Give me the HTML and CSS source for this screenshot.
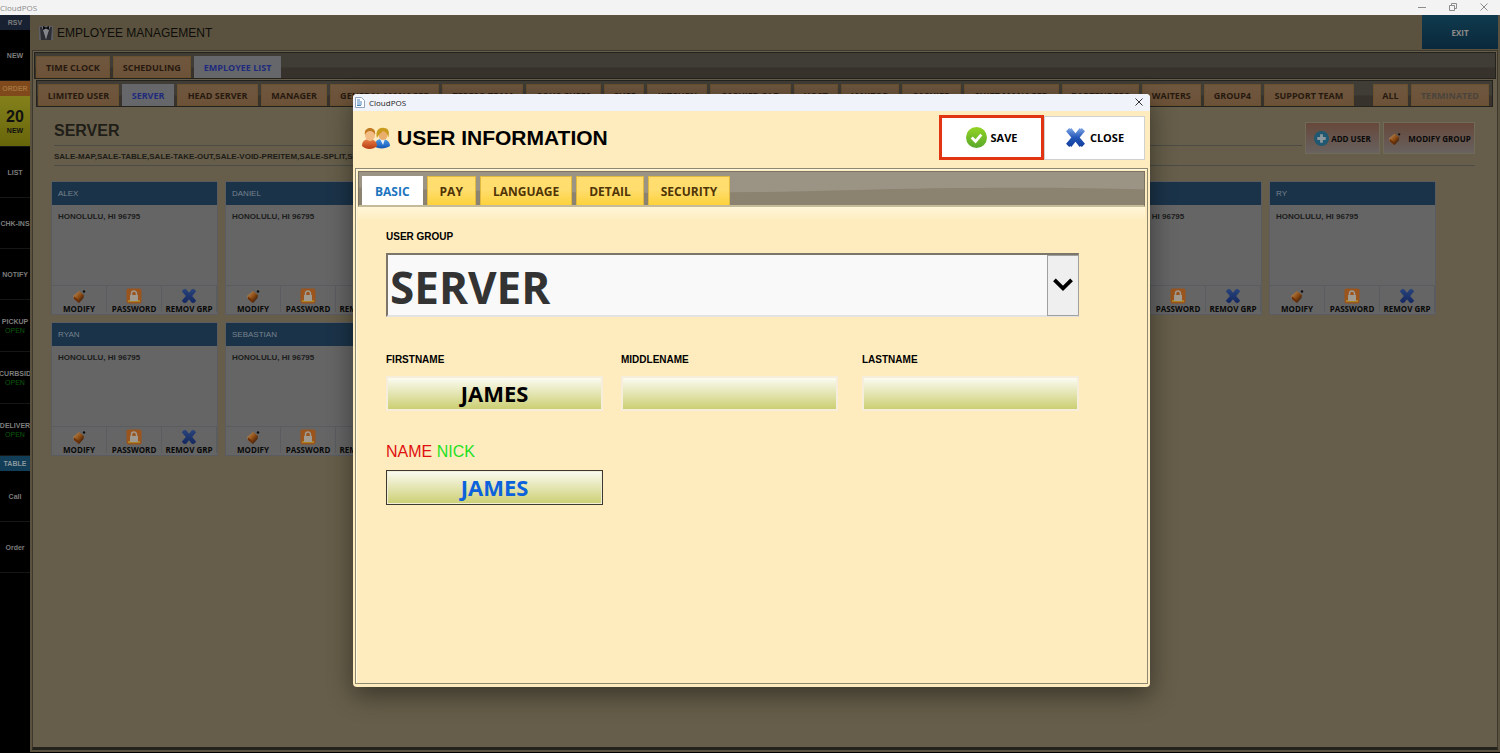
FILE: index.html
```
<!DOCTYPE html>
<html lang="en">

<head>
    <meta charset="UTF-8">
    <title>CloudPOS</title>
    <link rel="stylesheet" href="styles.css">
</head>

<body>

    <!-- shared icons -->
    <svg class="sprite" aria-hidden="true">
        <defs>
            <linearGradient id="g-blue" x1="0" y1="0" x2="0" y2="1">
                <stop offset="0" stop-color="#7fa6e6" />
                <stop offset=".5" stop-color="#2457b8" />
                <stop offset="1" stop-color="#123f9c" />
            </linearGradient>
            <linearGradient id="g-dim" x1="0" y1="0" x2="0" y2="1">
                <stop offset="0" stop-color="#29447c" />
                <stop offset="1" stop-color="#14275f" />
            </linearGradient>
            <linearGradient id="g-green" x1="0" y1="0" x2="0" y2="1">
                <stop offset="0" stop-color="#93d423" />
                <stop offset="1" stop-color="#58a82c" />
            </linearGradient>
            <linearGradient id="g-red" x1="0" y1="0" x2="0" y2="1">
                <stop offset="0" stop-color="#e8824a" />
                <stop offset="1" stop-color="#b83a10" />
            </linearGradient>
            <linearGradient id="g-shirt" x1="0" y1="0" x2="0" y2="1">
                <stop offset="0" stop-color="#4a9ae8" />
                <stop offset="1" stop-color="#1656b4" />
            </linearGradient>
            <linearGradient id="g-pen" x1="0" y1="0" x2="1" y2="1">
                <stop offset=".2" stop-color="#a87a4a" />
                <stop offset=".5" stop-color="#8f4c12" />
                <stop offset=".8" stop-color="#43220c" />
            </linearGradient>
        </defs>
        <symbol id="i-pen" viewBox="0 0 16 16">
            <path d="M2 8 8 3l5 4-.5 3L8 15 3 11z" fill="url(#g-pen)" />
            <path d="m3 8.500 4.500 3.500L8 15 3 11z" fill="#6b3008" />
            <circle cx="13" cy="3.500" r="1.200" fill="#0c0c0c" />
        </symbol>
        <symbol id="i-lock" viewBox="0 0 16 16">
            <rect x=".5" y=".5" width="15" height="15" rx="2" fill="#9a541d" />
            <path d="M2 12h12v2H2z" fill="#a98022" />
            <path d="M4 7h8v6H4z" fill="#a09a90" />
            <path d="M5.500 7V5.500a2.500 2.500 0 0 1 5 0V7" fill="none" stroke="#a09a90" stroke-width="1.500" />
        </symbol>
        <symbol id="i-x" viewBox="0 0 20 20">
            <path d="M1 4 4 1l1 1 1-1 4 5 4-5 1 1 1-1 3 3-5 6 5 6-3 3-1-1-1 1-4-5-4 5-1-1-1 1-3-3 5-6z" />
        </symbol>
    </svg>

    <div class="titlebar">
        <span>CloudPOS</span>
        <div class="win-buttons">
            <button type="button" aria-label="Minimize"><svg viewBox="0 0 8 8"><path d="M0 4.500h8" /></svg></button>
            <button type="button" aria-label="Restore"><svg viewBox="0 0 8 8"><path d="M.5 2.500h5v5h-5zM2.500 2V.5h5v5H6" /></svg></button>
            <button type="button" aria-label="Close window"><svg viewBox="0 0 8 8"><path d="m.5.500 7 7m0-7-7 7" /></svg></button>
        </div>
    </div>

    <div class="app">
        <nav class="side">
            <h2 class="side-rsv">RSV</h2>
            <button type="button">NEW</button>
            <h2 class="side-order">ORDER</h2>
            <button type="button" class="side-new"><b>20</b>NEW</button>
            <button type="button">LIST</button>
            <button type="button">CHK-INS</button>
            <button type="button">NOTIFY</button>
            <button type="button" class="open">PICKUP<i>OPEN</i></button>
            <button type="button" class="open">CURBSID<i>OPEN</i></button>
            <button type="button" class="open">DELIVER<i>OPEN</i></button>
            <h2 class="side-table">TABLE</h2>
            <button type="button">Call</button>
            <button type="button">Order</button>
        </nav>

        <main class="main">
            <header class="top">
                <svg class="tux" viewBox="0 0 14 14">
                    <path d="M0 0h14v14H0z" fill="#5d5e63" />
                    <path d="M1 1h3l3 13H2zM13 1h-3L7 14h5z" fill="#2b2d33" />
                    <path d="m3 1 4 12 4-12z" fill="#85868a" />
                    <path d="m4 0 3 1.500L10 0v4L7 2.500 4 4z" fill="#0b0b0c" />
                </svg>
                <h1>EMPLOYEE MANAGEMENT</h1>
                <button type="button" class="exit">EXIT</button>
            </header>

            <div class="frame">
                <div class="bar bar-main">
                    <button type="button">TIME CLOCK</button>
                    <button type="button">SCHEDULING</button>
                    <button type="button" class="active">EMPLOYEE LIST</button>
                </div>

                <div class="bar bar-groups">
                    <button type="button">LIMITED USER</button>
                    <button type="button" class="active">SERVER</button>
                    <button type="button">HEAD SERVER</button>
                    <button type="button">MANAGER</button>
                    <button type="button">GENERAL MANAGER</button>
                    <button type="button">TEPESO TEAM</button>
                    <button type="button">SOUS CHEFS</button>
                    <button type="button">CHEF</button>
                    <button type="button">KITCHEN</button>
                    <button type="button">CASHIER OLD</button>
                    <button type="button">HOST</button>
                    <button type="button">JANITOR</button>
                    <button type="button">CASHIER</button>
                    <button type="button">SHIFT MANAGER</button>
                    <button type="button">BARTENDERS</button>
                    <button type="button">WAITERS</button>
                    <button type="button">GROUP4</button>
                    <button type="button">SUPPORT TEAM</button>
                    <span></span>
                    <button type="button">ALL</button>
                    <button type="button" class="off">TERMINATED</button>
                </div>

                <section class="group">
                    <div class="group-head">
                        <h2>SERVER</h2>
                        <div class="group-tools">
                            <button type="button">
                                <svg viewBox="0 0 16 16"><circle cx="8" cy="8" r="8" fill="#1f5870" /><path d="M8 3.500v9M3.500 8h9" stroke="#8b979c" stroke-width="3" /></svg>
                                ADD USER
                            </button>
                            <button type="button" class="wide"><svg><use href="#i-pen" /></svg>MODIFY GROUP</button>
                        </div>
                    </div>
                    <p class="perms">SALE-MAP,SALE-TABLE,SALE-TAKE-OUT,SALE-VOID-PREITEM,SALE-SPLIT,SALE</p>

                    <div class="cards">
                        <article class="card">
                            <h3>ALEX</h3>
                            <p>HONOLULU, HI 96795</p>
                            <footer>
                                <button type="button"><svg><use href="#i-pen" /></svg>MODIFY</button>
                                <button type="button"><svg><use href="#i-lock" /></svg>PASSWORD</button>
                                <button type="button"><svg><use href="#i-x" /></svg>REMOV GRP</button>
                            </footer>
                        </article>
                        <article class="card">
                            <h3>DANIEL</h3>
                            <p>HONOLULU, HI 96795</p>
                            <footer>
                                <button type="button"><svg><use href="#i-pen" /></svg>MODIFY</button>
                                <button type="button"><svg><use href="#i-lock" /></svg>PASSWORD</button>
                                <button type="button"><svg><use href="#i-x" /></svg>REMOV GRP</button>
                            </footer>
                        </article>
                        <article class="card"></article>
                        <article class="card"></article>
                        <article class="card"></article>
                        <article class="card"></article>
                        <article class="card">
                            <h3></h3>
                            <p>HONOLULU, HI 96795</p>
                            <footer>
                                <button type="button"><svg><use href="#i-pen" /></svg>MODIFY</button>
                                <button type="button"><svg><use href="#i-lock" /></svg>PASSWORD</button>
                                <button type="button"><svg><use href="#i-x" /></svg>REMOV GRP</button>
                            </footer>
                        </article>
                        <article class="card">
                            <h3>RY</h3>
                            <p>HONOLULU, HI 96795</p>
                            <footer>
                                <button type="button"><svg><use href="#i-pen" /></svg>MODIFY</button>
                                <button type="button"><svg><use href="#i-lock" /></svg>PASSWORD</button>
                                <button type="button"><svg><use href="#i-x" /></svg>REMOV GRP</button>
                            </footer>
                        </article>
                        <article class="card">
                            <h3>RYAN</h3>
                            <p>HONOLULU, HI 96795</p>
                            <footer>
                                <button type="button"><svg><use href="#i-pen" /></svg>MODIFY</button>
                                <button type="button"><svg><use href="#i-lock" /></svg>PASSWORD</button>
                                <button type="button"><svg><use href="#i-x" /></svg>REMOV GRP</button>
                            </footer>
                        </article>
                        <article class="card">
                            <h3>SEBASTIAN</h3>
                            <p>HONOLULU, HI 96795</p>
                            <footer>
                                <button type="button"><svg><use href="#i-pen" /></svg>MODIFY</button>
                                <button type="button"><svg><use href="#i-lock" /></svg>PASSWORD</button>
                                <button type="button"><svg><use href="#i-x" /></svg>REMOV GRP</button>
                            </footer>
                        </article>
                    </div>
                </section>
            </div>
        </main>
    </div>

    <!-- user dialog -->
    <div class="dialog" role="dialog" aria-labelledby="dialog-title">
        <div class="dialog-bar">
            <svg class="doc" viewBox="0 0 10 11">
                <path d="M.5.500h6l3 3v7h-9z" fill="#fff" stroke="#8fa3bd" />
                <path d="M2 3h3M2 5h5M2 7h5M2 8.500h4" stroke="#4b84bd" />
            </svg>
            <span>CloudPOS</span>
            <button type="button" aria-label="Close dialog"><svg viewBox="0 0 8 8"><path d="m.5.500 7 7m0-7-7 7" /></svg></button>
        </div>

        <div class="dialog-head">
            <svg class="users" viewBox="0 0 28 22">
                <path d="M13 20c0-6 2-8 7-8s8 3 8 7c-4 3-11 3-15 1z" fill="url(#g-shirt)" />
                <path d="m18 12 3 6 2-6z" fill="#e6eefa" />
                <ellipse cx="21" cy="7.500" rx="4.500" ry="5.500" fill="#eaae6c" />
                <path d="M15 11c-2-7 2-11 7-10 5 0 6 5 4 10 0-4-2-6-5-7-2 2-4 3-6 7z" fill="#c99a1e" />
                <path d="M0 19c0-5 3-7 7-7s8 2 8 7c-4 4-11 4-15 0z" fill="url(#g-red)" />
                <ellipse cx="8" cy="8" rx="5" ry="6" fill="#f2bd84" />
                <path d="M3 8C2 3 5 1 8 1s6 2 5 7c-1-3-3-4-5-4-2 0-4 1-5 4z" fill="#c27a22" />
            </svg>
            <h1 id="dialog-title">USER INFORMATION</h1>
            <button type="button" class="save">
                <svg viewBox="0 0 22 22"><circle cx="11" cy="11" r="11" fill="url(#g-green)" /><path d="m6 11 4 4 6-7" fill="none" stroke="#fff" stroke-width="3" /></svg>
                SAVE
            </button>
            <button type="button" class="close"><svg><use href="#i-x" /></svg>CLOSE</button>
        </div>

        <div class="panel">
            <div class="tabs">
                <svg class="wave" viewBox="0 0 100 36" preserveAspectRatio="none" aria-hidden="true"><path d="M0 17C25 24 45 24 62 20S90 17 100 19V36H0z" /></svg>
                <button type="button" class="active">BASIC</button>
                <button type="button">PAY</button>
                <button type="button">LANGUAGE</button>
                <button type="button">DETAIL</button>
                <button type="button">SECURITY</button>
            </div>

            <form class="user-form">
                <div class="row-group">
                    <label for="group">USER GROUP</label>
                    <div class="select-box">
                        <select id="group">
                            <option>SERVER</option>
                        </select>
                        <svg viewBox="0 0 30 62" aria-hidden="true"><path d="m6 25 9 9 9-9" /></svg>
                    </div>
                </div>
                <div class="row-names">
                    <div>
                        <label for="first">FIRSTNAME</label>
                        <input id="first" type="text" value="JAMES">
                    </div>
                    <div>
                        <label for="middle">MIDDLENAME</label>
                        <input id="middle" type="text">
                    </div>
                    <div>
                        <label for="last">LASTNAME</label>
                        <input id="last" type="text">
                    </div>
                </div>
                <div class="row-nick">
                    <label for="nick"><span class="red">NAME</span> <span class="green">NICK</span></label>
                    <input id="nick" type="text" value="JAMES">
                </div>
            </form>
        </div>
    </div>

</body>

</html>
```
FILE: styles.css
```
* {
    box-sizing: border-box;
}

body {
    margin: 0;
    height: 100vh;
    display: flex;
    flex-direction: column;
    overflow: hidden;
    background: #000;
    font-family: "Liberation Sans", Arial, sans-serif;
}

h1,
h2,
h3,
p {
    margin: 0;
}

button {
    margin: 0;
    padding: 0;
    border: 0;
    background: none;
    color: inherit;
    font: inherit;
    white-space: nowrap;
    cursor: pointer;
}

.sprite {
    position: absolute;
    width: 0;
    height: 0;
}

/* window title */
.titlebar {
    display: flex;
    justify-content: space-between;
    align-items: center;
    height: 15px;
    flex: none;
    padding-bottom: 1px;
    background: #f3f3f3;
    color: #8c8c8c;
    font: 8px "Open Sans", sans-serif;
}

.win-buttons {
    display: flex;
    gap: 23px;
    padding-right: 12px;
}

.win-buttons svg,
.dialog-bar button svg {
    display: block;
    width: 8px;
    height: 8px;
    fill: none;
    stroke: #8c8c8c;
}

.app {
    display: flex;
    flex: 1;
    min-height: 0;
}

/* left menu */
.side {
    width: 30px;
    flex: none;
    overflow: hidden;
    background: #000;
    color: #7d7d7d;
    font-size: 7px;
    font-weight: bold;
}

.side h2 {
    height: 15px;
    font-size: 7px;
    line-height: 15px;
    text-align: center;
}

.side-rsv {
    background: #182132;
}

.side-order {
    background: #80491c;
    color: #a3733c;
}

.side-table {
    background: #123d56;
    color: #8b979e;
}

.side button {
    display: flex;
    flex-direction: column;
    align-items: center;
    justify-content: center;
    width: 100%;
    height: 51px;
    border-bottom: 1px solid #161616;
    line-height: 9px;
}

.side .open {
    height: 52px;
}

.side i {
    color: #0b5a0b;
    font-style: normal;
    font-weight: normal;
}

.side .side-new {
    background: linear-gradient(#84811c, #67650a);
    color: #111;
}

.side b {
    font-size: 16px;
    line-height: 18px;
}

/* employee management */
.main {
    flex: 1;
    min-width: 0;
    display: flex;
    flex-direction: column;
    padding: 0 2px 2px 2px;
    background: #5a523e;
    border-bottom: 1px solid #000;
}

.top {
    display: flex;
    align-items: center;
    gap: 4px;
    height: 35px;
    flex: none;
    padding-left: 7px;
}

.tux {
    width: 14px;
    height: 14px;
}

.top h1 {
    flex: 1;
    color: #0e0d0a;
    font-size: 12px;
    font-weight: normal;
}

.exit {
    width: 76px;
    height: 34px;
    align-self: flex-start;
    background: linear-gradient(#0f3a4e, #0b283b);
    color: #8c8c88;
    font: bold 8px "Open Sans", sans-serif;
}

.frame {
    flex: 1;
    min-height: 0;
    padding: 1px 1px 0;
    border: 1px solid #3c382e;
    border-bottom: 3px solid #24221c;
    background: #665e4a;
}

.bar {
    display: flex;
    gap: 3px;
    height: 27px;
    padding: 3px 3px 0 1px;
    border: 1px solid #24221d;
    background: linear-gradient(#403d36 55%, #37332c 60%);
}

.bar button {
    padding: 0 9px;
    overflow: hidden;
    background: linear-gradient(#6f573f, #6c5238);
    border: 1px solid #69502e;
    color: #27190f;
    font: bold 9px "Open Sans", sans-serif;
}

.bar .active {
    background: #66676b;
    border-color: #66676b;
    color: #202a7c;
}

.bar .off {
    color: #4b443c;
}

.bar-groups {
    display: grid;
    grid-template-columns: 81fr 52fr 81fr 66fr 109fr 81fr 75fr 40fr 60fr 80fr 44fr 58fr 59fr 95fr 77fr 59fr 57fr 90fr 13fr 35fr 78fr;
    margin: 1px 3px 0 2px;
}

.bar-groups button {
    padding: 0;
}

.group {
    padding: 15px 21px 0 20px;
}

.group-head {
    display: flex;
    justify-content: space-between;
    gap: 3px;
    height: 32px;
}

.group h2 {
    flex: 1;
    height: 24px;
    border-bottom: 1px solid #4b4c46;
    color: #1f1d18;
    font-size: 16px;
    line-height: 18px;
}

.group-tools {
    display: flex;
    gap: 3px;
}

.group-tools button {
    display: flex;
    align-items: center;
    justify-content: center;
    gap: 2px;
    width: 75px;
    border: 1px solid #706a58;
    background: linear-gradient(#66483a, #686260);
    color: #0a0a0a;
    font: bold 8px "Open Sans", sans-serif;
}

.group-tools .wide {
    width: 92px;
    gap: 6px;
}

.group-tools svg {
    width: 15px;
    height: 15px;
    flex: none;
}

.group .perms {
    height: 12px;
    border-bottom: 1px solid #4b4c46;
    color: #1d1b17;
    font-size: 8px;
    font-weight: bold;
    line-height: 6px;
}

.cards {
    display: grid;
    grid-template-columns: repeat(auto-fill, 167px);
    gap: 7px;
    margin: 15px -3px 0;
}

.card {
    display: flex;
    flex-direction: column;
    height: 134px;
    padding-bottom: 2px;
    border: 1px solid #5a5c60;
    background: #656565;
    color: #1c1c1c;
    font-size: 8px;
}

.card h3 {
    height: 23px;
    padding-left: 6px;
    background: #1b3349;
    color: #76828d;
    font-size: 8px;
    font-weight: normal;
    line-height: 23px;
}

.card p {
    flex: 1;
    padding: 7px 6px;
    font-weight: bold;
    line-height: 9px;
}

.card footer {
    display: flex;
    height: 27px;
    border-top: 1px solid #5b5c60;
}

.card button {
    display: flex;
    flex-direction: column;
    align-items: center;
    flex: 1;
    height: 26px;
    padding-top: 2px;
    overflow: hidden;
    border-right: 1px solid #5b5c60;
    color: #090909;
    font: bold 8px "Open Sans", sans-serif;
    line-height: 10px;
}

.card svg {
    width: 16px;
    height: 16px;
    flex: none;
    fill: url(#g-dim);
}

/* dialog */
.dialog {
    position: absolute;
    top: 94px;
    bottom: 66px;
    left: calc(50% - 397px);
    width: 797px;
    display: flex;
    flex-direction: column;
    padding: 0 2px 3px;
    overflow: hidden;
    border-radius: 4px;
    background: #feecbe;
    box-shadow: 0 8px 26px rgba(0, 0, 0, .45);
}

.dialog-bar {
    display: flex;
    align-items: center;
    gap: 4px;
    height: 17px;
    flex: none;
    margin: 0 -2px;
    padding: 0 7px 1px 2px;
    background: #f1f3fb;
    color: #222;
    font: 8px "Open Sans", sans-serif;
}

.dialog-bar span {
    flex: 1;
}

.doc {
    width: 10px;
    height: 11px;
}

.dialog-bar button svg {
    stroke: #333;
}

.dialog-head {
    display: flex;
    align-items: center;
    height: 57px;
    flex: none;
    padding: 0 3px 4px 7px;
}

.users {
    width: 28px;
    height: 22px;
}

.dialog-head h1 {
    flex: 1;
    padding-left: 7px;
    color: #000;
    font-size: 21px;
}

.dialog-head button {
    display: flex;
    align-items: center;
    justify-content: center;
    gap: 4px;
    width: 101px;
    height: 44px;
    border: 1px solid #d0d0d0;
    background: #fff;
    color: #000;
    font: bold 11px "Open Sans", sans-serif;
}

.dialog-head .save {
    width: 105px;
    height: 45px;
    border: 3px solid #e03413;
}

.dialog-head button svg {
    width: 21px;
    height: 21px;
    fill: url(#g-blue);
}

.panel {
    flex: 1;
    padding: 2px;
    border: 1px solid #8f8871;
    box-shadow: inset 1px 1px #fff7e0;
}

.tabs {
    position: relative;
    display: flex;
    gap: 4px;
    height: 36px;
    padding: 4px 3px 0;
    background: #9b9384;
    border: 1px solid #7b7464;
    border-bottom: 2px solid #c6bb99;
}

.wave {
    position: absolute;
    inset: 0;
    width: 100%;
    height: 100%;
    fill: #8b8270;
}

.tabs button {
    position: relative;
    padding: 0 12px;
    border: 1px solid #e2b93f;
    border-bottom: 0;
    background: linear-gradient(#ffdd6e 45%, #fdd23c);
    color: #4f3506;
    font: bold 12px "Open Sans", sans-serif;
}

.tabs .active {
    background: #fff;
    border-color: #fff;
    color: #1b74c0;
}

.user-form {
    display: flex;
    flex-direction: column;
    padding: 24px 66px 0 28px;
    background: linear-gradient(#fff6d8, #feecbe 14px);
}

.user-form label {
    display: block;
    height: 22px;
    color: #000;
    font-size: 10px;
    font-weight: bold;
    line-height: 12px;
}

.select-box {
    display: grid;
    height: 64px;
    border: 2px solid #7c756a;
    border-right: 1px solid #a0a0a0;
    border-bottom: 2px solid #e2e2e2;
    background: #f9f9f9;
}

.select-box select,
.select-box svg {
    grid-area: 1 / 1;
}

.select-box select {
    width: 100%;
    height: 61px;
    padding: 2px 2px 0;
    border: 0;
    background: none;
    appearance: none;
    color: #333;
    font: bold 44px "Open Sans", sans-serif;
}

.select-box svg {
    justify-self: end;
    width: 31px;
    height: 61px;
    border: 1px solid #a0a0a0;
    border-right: 0;
    background: #efefef;
    fill: none;
    stroke: #000;
    stroke-width: 4;
    pointer-events: none;
}

.row-names {
    display: grid;
    grid-template-columns: 235fr 241fr 217fr;
    padding-top: 37px;
}

.row-names input,
.row-nick {
    width: 217px;
}

.row-nick {
    padding-top: 31px;
}

.row-nick label {
    height: 28px;
    font-size: 16px;
    font-weight: normal;
    line-height: 20px;
}

.red {
    color: #e01010;
}

.green {
    color: #1fe01f;
}

.user-form input {
    display: block;
    height: 35px;
    padding: 0 0 2px;
    border: 2px solid #f6eedb;
    background: linear-gradient(#fbfbf2, #cccf72);
    color: #000;
    font: bold 22px "Open Sans", sans-serif;
    text-align: center;
}

.user-form .row-nick input {
    width: 100%;
    border: 1px solid #3c3a30;
    box-shadow: inset 0 0 0 1px #f3efd6;
    color: #0b62dc;
}
```
